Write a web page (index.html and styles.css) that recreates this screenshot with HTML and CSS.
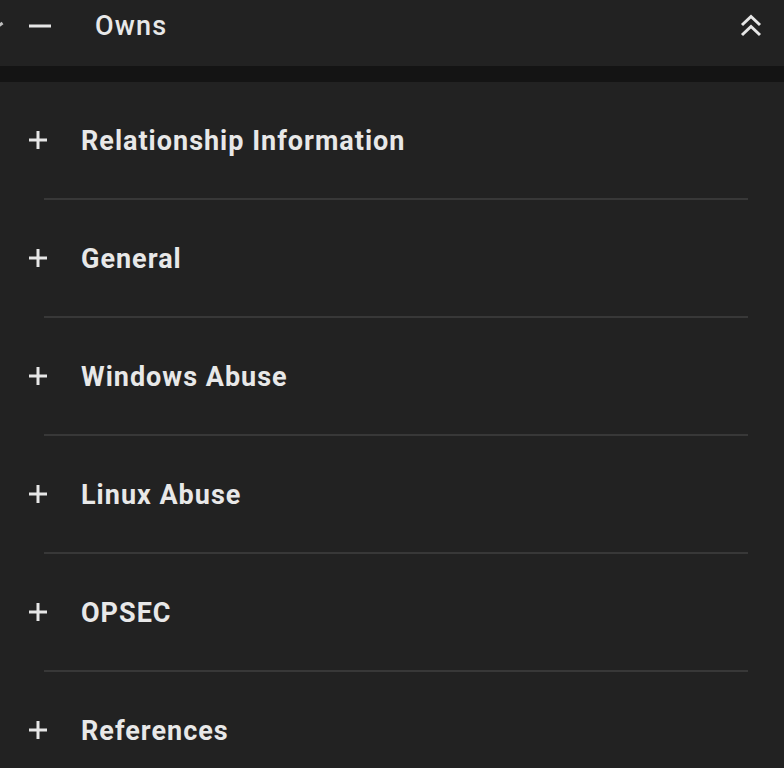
FILE: index.html
```html
<!DOCTYPE html>
<html>
<head>
<meta charset="utf-8">
<link rel="stylesheet" href="styles.css">
</head>
<body>
<div class="panel">
  <header class="head">
    <span class="edge"></span>
    <svg class="minus" width="24" height="24" viewBox="0 0 24 24"><path d="M1 12h22" stroke="#e6e6e6" stroke-width="3"/></svg>
    <span class="title">Owns</span>
    <svg class="collapse" width="26" height="26" viewBox="0 0 26 26"><path d="M4 12l9-8.5 9 8.5M4 22l9-8.5 9 8.5" fill="none" stroke="#e6e6e6" stroke-width="3"/></svg>
  </header>
  <div class="strip"></div>
  <ul class="list">
    <li class="item"><svg class="plus" width="20" height="20" viewBox="0 0 20 20"><path d="M10 1v18M1 10h18" stroke="#e6e6e6" stroke-width="3"/></svg><span>Relationship Information</span></li>
    <li class="item"><svg class="plus" width="20" height="20" viewBox="0 0 20 20"><path d="M10 1v18M1 10h18" stroke="#e6e6e6" stroke-width="3"/></svg><span>General</span></li>
    <li class="item"><svg class="plus" width="20" height="20" viewBox="0 0 20 20"><path d="M10 1v18M1 10h18" stroke="#e6e6e6" stroke-width="3"/></svg><span>Windows Abuse</span></li>
    <li class="item"><svg class="plus" width="20" height="20" viewBox="0 0 20 20"><path d="M10 1v18M1 10h18" stroke="#e6e6e6" stroke-width="3"/></svg><span>Linux Abuse</span></li>
    <li class="item"><svg class="plus" width="20" height="20" viewBox="0 0 20 20"><path d="M10 1v18M1 10h18" stroke="#e6e6e6" stroke-width="3"/></svg><span>OPSEC</span></li>
    <li class="item"><svg class="plus" width="20" height="20" viewBox="0 0 20 20"><path d="M10 1v18M1 10h18" stroke="#e6e6e6" stroke-width="3"/></svg><span>References</span></li>
  </ul>
</div>
</body>
</html>
```
FILE: styles.css
```css
html, body {
  margin: 0;
  padding: 0;
  background: #222222;
  height: 100%;
  overflow: hidden;
}
.panel {
  font-family: Roboto, "Liberation Sans", sans-serif;
  color: #e8e8e8;
  background: #222222;
}
.head {
  height: 66px;
  display: flex;
  align-items: center;
  position: relative;
  padding-left: 28px;
  padding-right: 20px;
}
.edge {
  position: absolute;
  left: -2px;
  top: 23px;
  width: 5px;
  height: 3px;
  background: #bdbdbd;
  transform: rotate(-35deg);
}
.minus {
  margin-top: -14px;
}
.title {
  font-size: 27px;
  font-weight: 500;
  letter-spacing: 1.2px;
  margin-left: 43px;
  margin-top: -15px;
}
.collapse {
  margin-left: auto;
  margin-top: -14px;
}
.strip {
  height: 16px;
  background: #141414;
}
.list {
  list-style: none;
  margin: 0;
  padding: 0 36px 0 0;
}
.item {
  height: 116px;
  display: flex;
  align-items: center;
  margin-left: 44px;
  border-bottom: 2px solid #383838;
  position: relative;
  font-size: 27px;
  font-weight: 700;
  letter-spacing: 1px;
}
.plus {
  position: absolute;
  left: -16px;
}
.item span {
  margin-left: 37px;
  position: relative;
  top: 1px;
}
```
